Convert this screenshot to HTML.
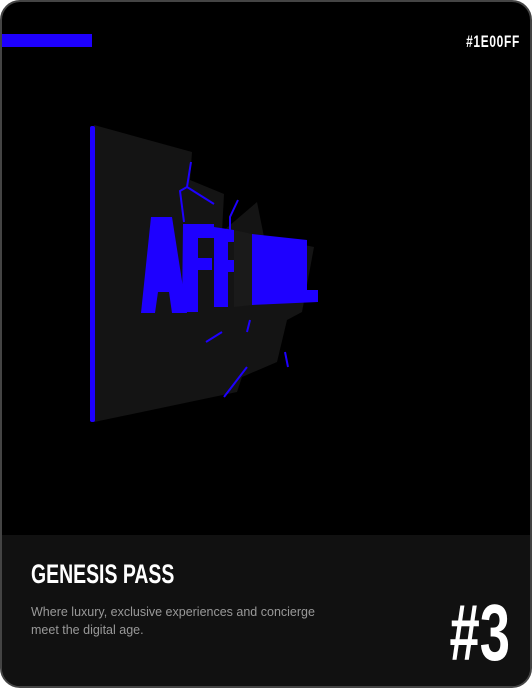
<html><head><style>
body{margin:0;width:532px;height:688px;background:#fff;overflow:hidden;font-family:"Liberation Sans",sans-serif}
.card{position:absolute;left:0;top:0;width:528px;height:684px;border:2px solid #444;border-radius:20px;background:#000;overflow:hidden}
.bar{position:absolute;left:0;top:32px;width:90px;height:13px;background:#1e00ff}
.hex{position:absolute;right:10px;top:30px;color:#fff;font-weight:bold;font-size:17px;transform:scaleX(.7);transform-origin:right;letter-spacing:1px}
.foot{position:absolute;left:0;top:533px;width:528px;height:151px;background:#111}
.t{position:absolute;left:29px;top:24px;color:#fff;font-weight:bold;font-size:27px;transform:scaleX(.72);transform-origin:left;white-space:nowrap}
.d{position:absolute;left:29px;top:68px;color:#999;font-size:12.5px;line-height:18px;width:300px}
.n{position:absolute;right:20px;top:52px;color:#fff;font-weight:bold;font-size:80px;transform:scaleX(.68);transform-origin:right}
</style></head><body>
<div class="card">
<div class="bar"></div><div class="hex">#1E00FF</div>
<svg width="528" height="530" style="position:absolute;left:0;top:0">
<polygon points="92,123 190,150 188,178 222,192 220,230 255,200 262,235 312,245 300,310 285,318 275,360 240,375 235,390 92,420" fill="#141414"/>
<rect x="88" y="124" width="5" height="296" rx="2" fill="#1e00ff"/>
<path d="M189,160 L185,185 L178,189 L182,220 M185,185 L212,202 M236,198 L228,215 L228,240 M220,330 L204,340 M245,365 L222,395 M248,318 L245,330 M283,350 L286,365" stroke="#1e00ff" stroke-width="2" fill="none"/>
<g fill="#1e00ff">
<polygon points="149,215 170,215 185,311 170,311 167,290 156,290 153,311 139,311"/>
<polygon points="181,222 212,222 212,236 196,236 196,256 210,256 210,268 196,268 196,310 180,310"/>
<polygon points="212,225 232,228 232,240 226,240 226,258 232,258 232,270 226,270 226,305 212,305"/>
<polygon points="250,232 305,238 305,288 316,288 316,300 250,303"/>
</g>
<polygon points="232,228 250,232 250,303 232,305" fill="#1a1a1a"/>
</svg>
<div class="foot">
<div class="t">GENESIS PASS</div>
<div class="d">Where luxury, exclusive experiences and concierge meet the digital age.</div>
<div class="n">#3</div>
</div>
</div>
</body></html>
